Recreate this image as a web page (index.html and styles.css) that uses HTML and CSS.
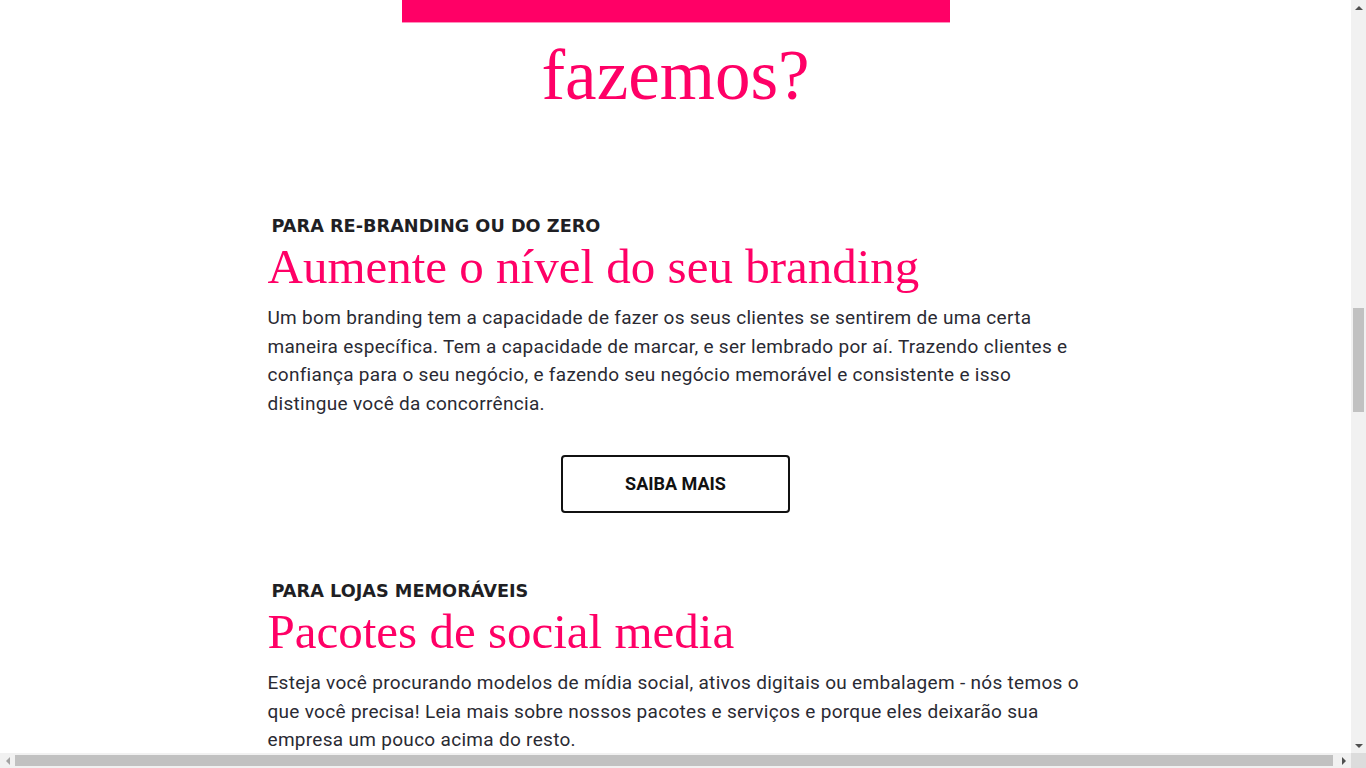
FILE: index.html
```html
<!DOCTYPE html>
<html lang="pt-BR">
<head>
<meta charset="utf-8">
<title>O que fazemos?</title>
<link rel="stylesheet" href="styles.css">
</head>
<body>
<div class="window">
  <main class="viewport">
    <section class="intro">
      <div class="intro-band"></div>
      <h1 class="intro-title">fazemos?</h1>
    </section>

    <section class="service">
      <p class="service-kicker">PARA RE-BRANDING OU DO ZERO</p>
      <h2 class="service-title">Aumente o nível do seu branding</h2>
      <p class="service-text">Um bom branding tem a capacidade de fazer os seus clientes se sentirem de uma certa maneira específica. Tem a capacidade de marcar, e ser lembrado por aí. Trazendo clientes e confiança para o seu negócio, e fazendo seu negócio memorável e consistente e isso distingue você da concorrência.</p>
      <div class="service-action"><a class="btn" href="#">SAIBA MAIS</a></div>
    </section>

    <section class="service service-next">
      <p class="service-kicker">PARA LOJAS MEMORÁVEIS</p>
      <h2 class="service-title">Pacotes de social media</h2>
      <p class="service-text">Esteja você procurando modelos de mídia social, ativos digitais ou embalagem - nós temos o que você precisa! Leia mais sobre nossos pacotes e serviços e porque eles deixarão sua empresa um pouco acima do resto.</p>
    </section>
  </main>

  <div class="scrollbar scrollbar-v">
    <span class="sb-btn"><span class="arrow arrow-up"></span></span>
    <span class="sb-track sb-track-v"><span class="sb-thumb sb-thumb-v" style="margin-top:293px;height:104px"></span></span>
    <span class="sb-btn"><span class="arrow arrow-down"></span></span>
  </div>

  <div class="scrollbar scrollbar-h">
    <span class="sb-btn"><span class="arrow arrow-left"></span></span>
    <span class="sb-track sb-track-h"><span class="sb-thumb sb-thumb-h" style="width:1318px"></span></span>
    <span class="sb-btn"><span class="arrow arrow-right"></span></span>
  </div>

  <div class="scrollbar-corner"></div>
</div>
</body>
</html>
```

FILE: styles.css
```css
html, body {
  margin: 0;
  padding: 0;
  background: #ffffff;
}

.window {
  width: 1366px;
  height: 768px;
  overflow: hidden;
  display: grid;
  grid-template-columns: 1351px 15px;
  grid-template-rows: 753px 15px;
}

.viewport {
  overflow: hidden;
  display: flex;
  flex-direction: column;
  background: #ffffff;
}

.intro {
  display: flex;
  flex-direction: column;
  align-items: center;
}

.intro-band {
  width: 548px;
  height: 22px;
  background: #ff0066;
  border-bottom: 1px solid #ff8fbc;
}

.intro-title {
  margin: 17px 0 0;
  font-family: "Liberation Serif", serif;
  font-weight: 400;
  font-size: 71px;
  line-height: 1;
  color: #ff0066;
}

.service {
  width: 816px;
  margin: 0 auto;
  padding-top: 104px;
  display: flex;
  flex-direction: column;
}

.service-next {
  padding-top: 67px;
}

.service-kicker {
  margin: 0 0 1px;
  padding-left: 4px;
  font-family: "DejaVu Sans", sans-serif;
  font-weight: 700;
  font-size: 17.7px;
  line-height: 22px;
  color: #1f1f24;
}

.service-title {
  margin: 0;
  font-family: "Liberation Serif", serif;
  font-weight: 400;
  font-size: 49px;
  line-height: 1.2;
  color: #ff0066;
}

.service-text {
  margin: 7px 0 0;
  font-family: "Roboto", sans-serif;
  font-size: 19px;
  letter-spacing: 0.3px;
  line-height: 28.8px;
  color: #2a2a33;
}

.service-action {
  display: flex;
  justify-content: center;
  margin-top: 36px;
}

.btn {
  width: 229px;
  height: 58px;
  box-sizing: border-box;
  border: 2px solid #111111;
  border-radius: 4px;
  display: flex;
  align-items: center;
  justify-content: center;
  font-family: "Roboto", sans-serif;
  font-weight: 700;
  font-size: 18px;
  color: #111111;
  text-decoration: none;
}

/* browser-like scrollbars */
.scrollbar {
  display: flex;
  background: #f1f1f1;
}

.scrollbar-v {
  flex-direction: column;
}

.scrollbar-h {
  flex-direction: row;
}

.sb-btn {
  width: 15px;
  height: 15px;
  flex: none;
  display: flex;
  align-items: center;
  justify-content: center;
}

.sb-track {
  flex: 1;
  display: flex;
}

.sb-track-v {
  flex-direction: column;
  padding: 0 2px;
}

.sb-track-h {
  flex-direction: row;
  padding: 2px 0;
}

.sb-thumb {
  background: #c1c1c1;
  flex: none;
}

.sb-thumb-v {
  width: 11px;
}

.sb-thumb-h {
  height: 11px;
}

.arrow {
  width: 0;
  height: 0;
  border-style: solid;
  border-color: transparent;
}

.arrow-up {
  border-width: 0 4px 4px;
  border-bottom-color: #505050;
}

.arrow-down {
  border-width: 4px 4px 0;
  border-top-color: #505050;
}

.arrow-left {
  border-width: 4px 4px 4px 0;
  border-right-color: #a3a3a3;
}

.arrow-right {
  border-width: 4px 0 4px 4px;
  border-left-color: #505050;
}

.scrollbar-corner {
  background: #dcdcdc;
}
```
